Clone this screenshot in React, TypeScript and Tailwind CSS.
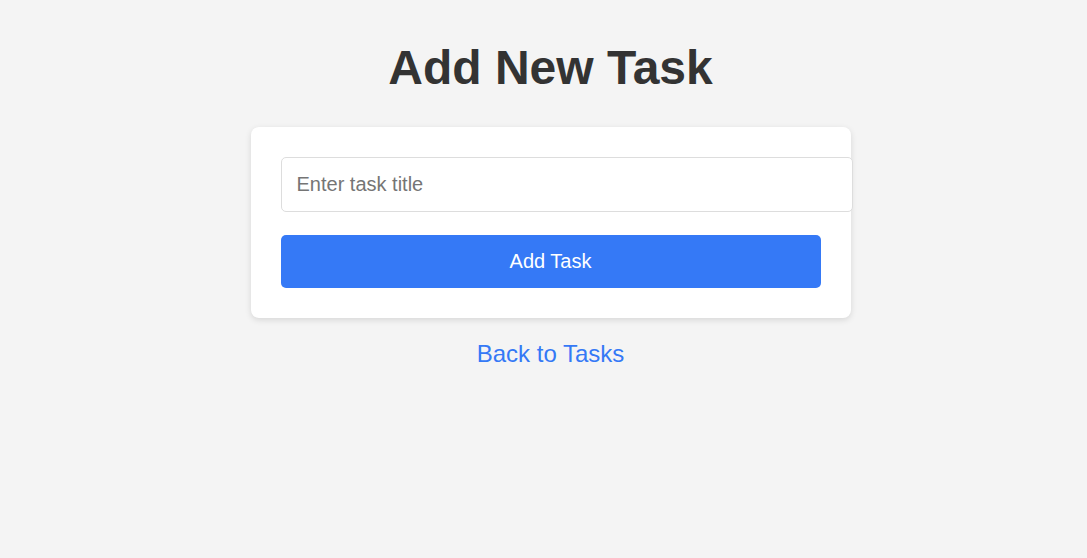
export default function App() {
  return (
    <main className="min-h-screen bg-[#f4f4f4] pl-[14px] pt-[40px] font-['Liberation_Sans',Arial,sans-serif]">
      <h1 className="text-center text-[48px] leading-[55px] font-bold text-[#333]">Add New Task</h1>

      <form
        onSubmit={(e) => e.preventDefault()}
        className="mx-auto mt-[32px] w-[600px] rounded-lg bg-white p-[30px] shadow-[0_2px_6px_rgba(0,0,0,0.12)]"
      >
        <input
          type="text"
          placeholder="Enter task title"
          className="mb-[23px] block box-content w-full rounded-[5px] border border-[#ddd] bg-white p-[15px] text-[20px] leading-[23px] text-[#333] placeholder:text-[#757575] outline-none"
        />
        <button
          type="submit"
          className="block w-full rounded-[5px] bg-[#3579f6] py-[15px] text-[20px] leading-[23px] text-white"
        >
          Add Task
        </button>
      </form>

      <div className="mt-[22px] text-center">
        <a href="#" className="text-[24px] leading-[28px] text-[#3579f6]">
          Back to Tasks
        </a>
      </div>
    </main>
  );
}
